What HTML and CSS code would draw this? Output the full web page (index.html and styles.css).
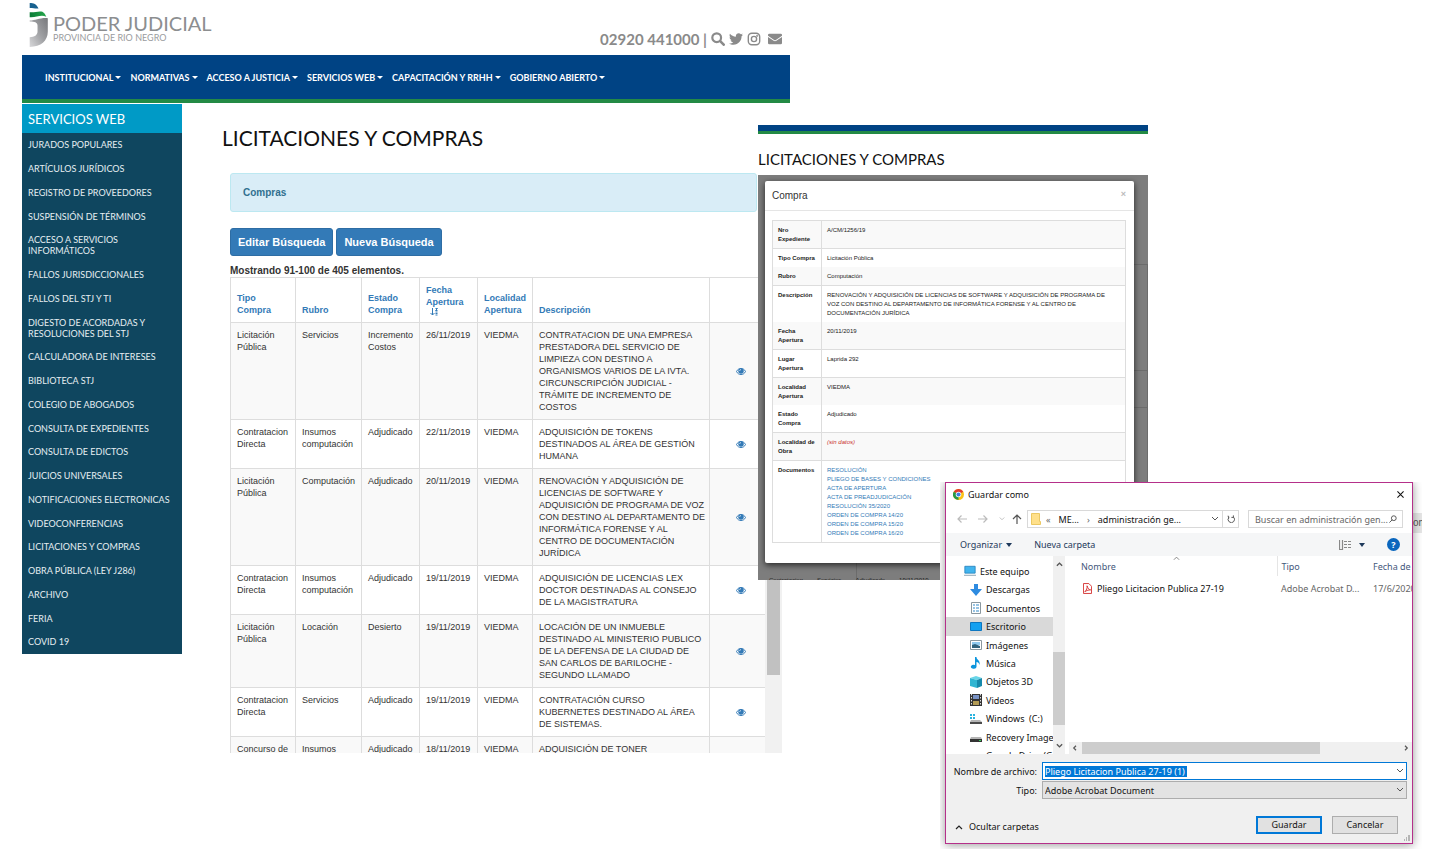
FILE: index.html
```html
<!DOCTYPE html>
<html lang="es">
<head>
<meta charset="utf-8">
<title>Poder Judicial - Licitaciones y Compras</title>
<link rel="stylesheet" href="styles.css">
</head>
<body>
<svg class="sprite" aria-hidden="true">
  <symbol id="eye" viewBox="0 0 20 14"><path fill="none" stroke="currentColor" stroke-width="2" d="M1 7c2-4 5-6 9-6s7 2 9 6c-2 4-5 6-9 6S3 11 1 7z"/><circle cx="10" cy="6" r="5.500" fill="currentColor"/><path fill="none" stroke="#fff" stroke-width="1.400" d="M7.500 6c0-2 1-3 2.500-3"/></symbol>
  <symbol id="down" viewBox="0 0 8 6"><path fill="none" stroke="currentColor" d="M1 1l3 3 3-3"/></symbol>
</svg>

<div class="site">
  <header class="site-header">
    <a class="brand" href="#">
      <svg class="brand-mark" viewBox="0 0 20 46" aria-hidden="true">
        <defs>
          <linearGradient id="gray" x1="1" y1="0" x2="0" y2="1"><stop offset="0" stop-color="#77787b"/><stop offset=".5" stop-color="#a0a1a4"/><stop offset="1" stop-color="#d8d8da"/></linearGradient>
          <linearGradient id="green" x1="0" y1="0" x2="1" y2="0"><stop offset="0" stop-color="#0a7a35"/><stop offset="1" stop-color="#27a84d"/></linearGradient>
        </defs>
        <path fill="#17618f" d="M1 0c4 0 7 1 9 5.500-3 .5-5-.5-9-.5z"/>
        <path fill="url(#green)" d="M1 9.500c5 .5 9-1.500 13-.5 2 1 3 3 4 5-6-2.500-10 1-17 .5z"/>
        <path fill="url(#gray)" d="M1 18c6 0 10-3 18.500-2.500v14c0 9-7 15.500-18.500 15.500V35c5 0 8-2 8-6v-6c0-3-3-4-8-4z"/>
      </svg>
      <span class="brand-text"><span class="brand-name">PODER JUDICIAL</span><span class="brand-sub">PROVINCIA DE RIO NEGRO</span></span>
    </a>
    <div class="contact">
      <span>02920 441000 |</span>
      <a href="#" aria-label="Buscar"><svg viewBox="0 0 16 16"><circle cx="6.500" cy="6.500" r="5" fill="none" stroke="currentColor" stroke-width="2.500"/><path stroke="currentColor" stroke-width="3" stroke-linecap="round" d="M10.500 10.500l4 4"/></svg></a>
      <a href="#" aria-label="Twitter"><svg viewBox="0 0 512 512"><path fill="currentColor" d="M459 152c.3 4.500.3 9 .3 13.600 0 139-105.600 299-298.500 299C101.500 464.500 46 447 0 417c8.500 1 16.600 1.300 25.300 1.300 49 0 94-16.600 130.300-45-46-1-85-31-98-73 6.500 1 13 1.600 20 1.600 9.400 0 19-1.300 27.600-3.600C57 288.500 21 246 21 195v-1.300c14 7.800 30 12.700 47.400 13.300C40 188 21 156 21 119.500c0-19.500 5-37.400 14.300-53 52 64 130 106 217 110.500-1.600-7.800-2.600-16-2.600-24C250 95 297 48 355 48c30 0 57.500 12.700 76.700 33 23.700-4.500 46.500-13.300 66.600-25.300-7.800 24.400-24.400 45-46 58 21-2.300 41.600-8 60.400-16.300-14.300 20.800-32 39.300-53 54z"/></svg></a>
      <a href="#" aria-label="Instagram"><svg viewBox="0 0 16 16" fill="none" stroke="currentColor" stroke-width="1.600"><rect x="1.500" y="1.500" width="13" height="13" rx="4"/><circle cx="8" cy="8" r="3"/><circle cx="11.700" cy="4.300" r=".4"/></svg></a>
      <a class="mail" href="#" aria-label="Correo"><svg viewBox="0 0 16 16"><path fill="currentColor" d="M1.500 2h13A1.500 1.500 0 0 1 16 3.500v.7L9 9q-1 .7-2 0L0 4.200v-.7A1.500 1.500 0 0 1 1.500 2zM0 5.600L6.500 10q1.500 1 3 0L16 5.600v6.900a1.500 1.500 0 0 1-1.500 1.500h-13A1.500 1.500 0 0 1 0 12.500z"/></svg></a>
    </div>
  </header>

  <nav class="main-nav">
    <a href="#">INSTITUCIONAL</a>
    <a href="#">NORMATIVAS</a>
    <a href="#">ACCESO A JUSTICIA</a>
    <a href="#">SERVICIOS WEB</a>
    <a href="#">CAPACITACIÓN Y RRHH</a>
    <a href="#">GOBIERNO ABIERTO</a>
  </nav>

  <div class="site-body">
    <aside class="sidebar">
      <h2>SERVICIOS WEB</h2>
      <ul>
        <li><a href="#">JURADOS POPULARES</a></li>
        <li><a href="#">ARTÍCULOS JURÍDICOS</a></li>
        <li><a href="#">REGISTRO DE PROVEEDORES</a></li>
        <li><a href="#">SUSPENSIÓN DE TÉRMINOS</a></li>
        <li><a href="#">ACCESO A SERVICIOS<br>INFORMÁTICOS</a></li>
        <li><a href="#">FALLOS JURISDICCIONALES</a></li>
        <li><a href="#">FALLOS DEL STJ Y TI</a></li>
        <li><a href="#">DIGESTO DE ACORDADAS Y<br>RESOLUCIONES DEL STJ</a></li>
        <li><a href="#">CALCULADORA DE INTERESES</a></li>
        <li><a href="#">BIBLIOTECA STJ</a></li>
        <li><a href="#">COLEGIO DE ABOGADOS</a></li>
        <li><a href="#">CONSULTA DE EXPEDIENTES</a></li>
        <li><a href="#">CONSULTA DE EDICTOS</a></li>
        <li><a href="#">JUICIOS UNIVERSALES</a></li>
        <li><a href="#">NOTIFICACIONES ELECTRONICAS</a></li>
        <li><a href="#">VIDEOCONFERENCIAS</a></li>
        <li><a href="#">LICITACIONES Y COMPRAS</a></li>
        <li><a href="#">OBRA PÚBLICA (LEY J286)</a></li>
        <li><a href="#">ARCHIVO</a></li>
        <li><a href="#">FERIA</a></li>
        <li><a href="#">COVID 19</a></li>
      </ul>
    </aside>

    <main class="content">
      <h1>LICITACIONES Y COMPRAS</h1>
      <div class="panel">
        <div class="alert">Compras</div>
        <div class="actions">
          <button type="button">Editar Búsqueda</button>
          <button type="button">Nueva Búsqueda</button>
        </div>
        <p class="summary">Mostrando 91-100 de 405 elementos.</p>
        <div class="results">
          <div class="results-view">
            <table class="grid">
              <colgroup><col class="c-tipo"><col class="c-rubro"><col class="c-estado"><col class="c-fecha"><col class="c-loc"><col class="c-desc"><col class="c-act"></colgroup>
              <thead>
                <tr>
                  <th><a href="#">Tipo<br>Compra</a></th>
                  <th><a href="#">Rubro</a></th>
                  <th><a href="#">Estado<br>Compra</a></th>
                  <th><a href="#">Fecha<br>Apertura<svg class="sort" viewBox="0 0 16 16" aria-hidden="true"><path fill="none" stroke="currentColor" stroke-width="2" d="M5 0v14M1 10l4 4 4-4M11 1h4l-4 4h4M11 8h4M11 11h4M11 14h4"/></svg></a></th>
                  <th><a href="#">Localidad<br>Apertura</a></th>
                  <th><a href="#">Descripción</a></th>
                  <th></th>
                </tr>
              </thead>
              <tbody>
                <tr><td>Licitación Pública</td><td>Servicios</td><td>Incremento Costos</td><td>26/11/2019</td><td>VIEDMA</td><td>CONTRATACION DE UNA EMPRESA<br>PRESTADORA DEL SERVICIO DE<br>LIMPIEZA CON DESTINO A<br>ORGANISMOS VARIOS DE LA IVTA.<br>CIRCUNSCRIPCIÓN JUDICIAL -<br>TRÁMITE DE INCREMENTO DE<br>COSTOS</td><td class="act"><a href="#" aria-label="Ver"><svg><use href="#eye"/></svg></a></td></tr>
                <tr><td>Contratacion Directa</td><td>Insumos computación</td><td>Adjudicado</td><td>22/11/2019</td><td>VIEDMA</td><td>ADQUISICIÓN DE TOKENS<br>DESTINADOS AL ÁREA DE GESTIÓN<br>HUMANA</td><td class="act"><a href="#" aria-label="Ver"><svg><use href="#eye"/></svg></a></td></tr>
                <tr><td>Licitación Pública</td><td>Computación</td><td>Adjudicado</td><td>20/11/2019</td><td>VIEDMA</td><td>RENOVACIÓN Y ADQUISICIÓN DE<br>LICENCIAS DE SOFTWARE Y<br>ADQUISICIÓN DE PROGRAMA DE VOZ<br>CON DESTINO AL DEPARTAMENTO DE<br>INFORMÁTICA FORENSE Y AL<br>CENTRO DE DOCUMENTACIÓN<br>JURÍDICA</td><td class="act"><a href="#" aria-label="Ver"><svg><use href="#eye"/></svg></a></td></tr>
                <tr><td>Contratacion Directa</td><td>Insumos computación</td><td>Adjudicado</td><td>19/11/2019</td><td>VIEDMA</td><td>ADQUISICIÓN DE LICENCIAS LEX<br>DOCTOR DESTINADAS AL CONSEJO<br>DE LA MAGISTRATURA</td><td class="act"><a href="#" aria-label="Ver"><svg><use href="#eye"/></svg></a></td></tr>
                <tr><td>Licitación Pública</td><td>Locación</td><td>Desierto</td><td>19/11/2019</td><td>VIEDMA</td><td>LOCACIÓN DE UN INMUEBLE<br>DESTINADO AL MINISTERIO PUBLICO<br>DE LA DEFENSA DE LA CIUDAD DE<br>SAN CARLOS DE BARILOCHE -<br>SEGUNDO LLAMADO</td><td class="act"><a href="#" aria-label="Ver"><svg><use href="#eye"/></svg></a></td></tr>
                <tr><td>Contratacion Directa</td><td>Servicios</td><td>Adjudicado</td><td>19/11/2019</td><td>VIEDMA</td><td>CONTRATACIÓN CURSO<br>KUBERNETES DESTINADO AL ÁREA<br>DE SISTEMAS.</td><td class="act"><a href="#" aria-label="Ver"><svg><use href="#eye"/></svg></a></td></tr>
                <tr><td>Concurso de</td><td>Insumos</td><td>Adjudicado</td><td>18/11/2019</td><td>VIEDMA</td><td>ADQUISICIÓN DE TONER</td><td></td></tr>
              </tbody>
            </table>
          </div>
          <div class="scrollbar"><div class="thumb"></div></div>
        </div>
      </div>
    </main>
  </div>
</div>

<section class="detail">
  <div class="detail-bar"></div>
  <h2>LICITACIONES Y COMPRAS</h2>
  <div class="backdrop">
    <div class="modal" role="dialog" aria-labelledby="modal-title">
      <div class="modal-head"><h3 id="modal-title">Compra</h3><button type="button" aria-label="Cerrar">×</button></div>
      <div class="modal-body">
        <table class="record">
          <tr><th>Nro<br>Expediente</th><td>A/CM/1256/19</td></tr>
          <tr class="plain line"><th>Tipo Compra</th><td>Licitación Pública</td></tr>
          <tr><th>Rubro</th><td>Computación</td></tr>
          <tr class="plain line"><th>Descripción</th><td>RENOVACIÓN Y ADQUISICIÓN DE LICENCIAS DE SOFTWARE Y ADQUISICIÓN DE PROGRAMA DE<br>VOZ CON DESTINO AL DEPARTAMENTO DE INFORMÁTICA FORENSE Y AL CENTRO DE<br>DOCUMENTACIÓN JURÍDICA</td></tr>
          <tr><th>Fecha<br>Apertura</th><td>20/11/2019</td></tr>
          <tr class="plain line"><th>Lugar<br>Apertura</th><td>Laprida 292</td></tr>
          <tr class="line"><th>Localidad<br>Apertura</th><td>VIEDMA</td></tr>
          <tr class="plain"><th>Estado<br>Compra</th><td>Adjudicado</td></tr>
          <tr class="line"><th>Localidad de<br>Obra</th><td><em>(sin datos)</em></td></tr>
          <tr class="plain line"><th>Documentos</th><td class="docs"><a href="#">RESOLUCIÓN</a><a href="#">PLIEGO DE BASES Y CONDICIONES</a><a href="#">ACTA DE APERTURA</a><a href="#">ACTA DE PREADJUDICACIÓN</a><a href="#">RESOLUCIÓN 35/2020</a><a href="#">ORDEN DE COMPRA 14/20</a><a href="#">ORDEN DE COMPRA 15/20</a><a href="#">ORDEN DE COMPRA 16/20</a></td></tr>
        </table>
      </div>
    </div>
    <div class="behind"><span>Contratacion</span><span>Servicios</span><span>Adjudicado</span><span>19/11/2019</span></div>
  </div>
</section>

<section class="save">
  <span class="edge-text">om</span>
  <form class="dialog" role="dialog" aria-labelledby="save-title">
    <div class="titlebar">
      <svg class="chrome" viewBox="0 0 24 24" aria-hidden="true"><circle cx="12" cy="12" r="12" fill="#fbc116"/><path fill="#e33b2e" d="M12 12L1.600 6A12 12 0 0 1 22.400 6z"/><path fill="#279847" d="M12 12v12A12 12 0 0 1 1.600 6z"/><circle cx="12" cy="12" r="6" fill="#fff"/><circle cx="12" cy="12" r="4.500" fill="#3f7de0"/></svg>
      <span id="save-title">Guardar como</span>
      <button type="button" class="close" aria-label="Cerrar"><svg viewBox="0 0 8 8"><path stroke="#111" stroke-width="1.200" d="M.5.5l7 7M7.500.5l-7 7"/></svg></button>
    </div>
    <div class="address-row">
      <button type="button" class="dim" aria-label="Atrás"><svg viewBox="0 0 10 8"><path d="M10 4H1M4.500.5L1 4l3.500 3.500"/></svg></button>
      <button type="button" class="dim" aria-label="Adelante"><svg viewBox="0 0 10 8"><path d="M0 4h9M5.500.5L9 4 5.500 7.500"/></svg></button>
      <button type="button" class="dim small" aria-label="Recientes"><svg viewBox="0 0 8 6"><path d="M1 1l3 3 3-3"/></svg></button>
      <button type="button" class="up" aria-label="Arriba"><svg viewBox="0 0 10 10"><path d="M5 10V1M1 5l4-4 4 4"/></svg></button>
      <div class="address">
        <svg class="folder" viewBox="0 0 10 12" aria-hidden="true"><path fill="#ffe08a" stroke="#ebc863" d="M.5.500h8v8h1v3h-9z"/></svg>
        <span class="chev">«</span><span class="crumb">ME...</span><span class="chev">›</span><span class="crumb last">administración ge...</span>
        <svg class="down"><use href="#down"/></svg>
        <button type="button" class="refresh" aria-label="Actualizar"><svg viewBox="0 0 10 10"><path d="M2 1.500H.8M2 1.500v3M2.300 3A4 4 0 1 0 8 2.500M8 .5v2.500H5.500"/></svg></button>
      </div>
      <label class="search"><input type="text" placeholder="Buscar en administración gen..." aria-label="Buscar"><svg viewBox="0 0 10 10"><circle cx="6" cy="4" r="3"/><path d="M4 6L.5 9.500"/></svg></label>
    </div>
    <div class="toolbar">
      <button type="button">Organizar <i class="tri"></i></button>
      <button type="button">Nueva carpeta</button>
      <span class="spacer"></span>
      <button type="button" class="view" aria-label="Vista"><svg viewBox="0 0 12 10"><path stroke="#888" d="M.5 0v9.500h3V0M5 1.500h3M9 1.500h3M5 4.500h3M9 4.500h3M5 7.500h3M9 7.500h3"/></svg><i class="tri"></i></button>
      <button type="button" class="help" aria-label="Ayuda">?</button>
    </div>
    <div class="browser">
      <div class="tree">
        <ul>
          <li class="root"><svg viewBox="0 0 14 12"><path fill="#41b4ee" stroke="#2683bd" d="M1 .5h12v8H1z"/><path stroke="#7c98ab" d="M0 11h14"/></svg>Este equipo</li>
          <li><svg viewBox="0 0 12 12"><path fill="#2e8be0" d="M4 0h4v5h4l-6 7-6-7h4z"/></svg>Descargas</li>
          <li><svg viewBox="0 0 12 12"><path fill="#fff" stroke="#8b989f" d="M1.500.5h9v11h-9z"/><path stroke="#3189c8" d="M3 3h2M6 3h3M3 6h2M6 6h3M3 9h2M6 9h3"/></svg>Documentos</li>
          <li class="selected"><svg viewBox="0 0 12 12"><path fill="#14a0f0" stroke="#0d76c0" d="M.5 1.500h11v8H.5z"/></svg>Escritorio</li>
          <li><svg viewBox="0 0 12 12"><path fill="#fff" stroke="#8b989f" d="M.5 1.500h11v9H.5z"/><path fill="#8fc9ee" d="M2 3h8v3H2z"/><path fill="#31637d" d="M2 9V6l3-1 5 2v2z"/></svg>Imágenes</li>
          <li><svg viewBox="0 0 12 12"><path fill="#0d95dd" d="M5 0h1.500c0 3 4 3 3 8-.5-2-1.500-3-3-3v5A2.800 2 0 1 1 5 8z"/></svg>Música</li>
          <li><svg viewBox="0 0 12 12"><path fill="#69d5e8" d="M0 2l6-2 6 2-5 2z"/><path fill="#30b5d2" d="M0 2l7 2v8l-7-2z"/><path fill="#1689ab" d="M7 4l5-2v8l-5 2z"/></svg>Objetos 3D</li>
          <li><svg viewBox="0 0 12 12"><path fill="#333" d="M0 0h12v12H0z"/><path stroke="#ddd" stroke-dasharray="1.500 1.500" d="M1.500 0v12M10.500 0v12"/><path fill="#7892c4" d="M3 1h6v4H3z"/><path fill="#b39b55" d="M3 7h6v4H3z"/></svg>Videos</li>
          <li><svg viewBox="0 0 12 12"><path fill="#29b3df" d="M0 1h2v2H0zM3 1h2v2H3zM0 4h2v2H0zM3 4h2v2H3z"/><path fill="#b5b5b5" d="M1 7h9l2 2H0z"/><path fill="#4b4b4b" d="M0 9h12v2H0z"/></svg>Windows&nbsp; (C:)</li>
          <li><svg viewBox="0 0 12 12"><path fill="#b5b5b5" d="M1 6h10l1 2H0z"/><path fill="#333" d="M0 8h12v3H0z"/><path fill="#3bd45b" d="M9 9h2v1H9z"/></svg>Recovery Image</li>
          <li><span class="noicon"></span>Google Drive (G:)</li>
        </ul>
      </div>
      <div class="vscroll"><svg viewBox="0 0 8 6"><path d="M1 5l3-3 3 3"/></svg><div class="vthumb"></div><svg viewBox="0 0 8 6"><path d="M1 1l3 3 3-3"/></svg></div>
      <div class="files">
        <table>
          <thead><tr><th class="f-name"><svg class="asc" viewBox="0 0 8 4" aria-hidden="true"><path fill="none" stroke="#777" d="M1 4l3-3 3 3"/></svg>Nombre</th><th class="f-type">Tipo</th><th>Fecha de</th></tr></thead>
          <tbody><tr><td class="f-name"><span><svg viewBox="0 0 10 12"><path fill="#fff" stroke="#d42a2a" d="M.5.5h6l3 3v8h-9z"/><path fill="none" stroke="#d42a2a" d="M2 9.500C4 8 5 5 4.500 3c1 3 2 4.500 4 4.500-2 0-4 .5-6.500 2z"/></svg>Pliego Licitacion Publica 27-19</span></td><td>Adobe Acrobat D...</td><td>17/6/2020</td></tr></tbody>
        </table>
        <div class="hscroll"><svg viewBox="0 0 6 8"><path d="M5 1L2 4l3 3"/></svg><div class="htrack"><div class="hthumb"></div></div><svg viewBox="0 0 6 8"><path d="M1 1l3 3-3 3"/></svg></div>
      </div>
    </div>
    <div class="fields">
      <label for="fname">Nombre de archivo:</label>
      <div class="combo active"><input id="fname" type="text" value="Pliego Licitacion Publica 27-19 (1)"><svg class="down"><use href="#down"/></svg></div>
      <label for="ftype">Tipo:</label>
      <div class="combo"><select id="ftype"><option>Adobe Acrobat Document</option></select><svg class="down"><use href="#down"/></svg></div>
    </div>
    <div class="footer">
      <button type="button" class="toggle"><svg viewBox="0 0 8 6"><path d="M1 5l3-3 3 3"/></svg>Ocultar carpetas</button>
      <span class="spacer"></span>
      <button type="submit" class="btn primary">Guardar</button>
      <button type="button" class="btn">Cancelar</button>
    </div>
    <svg class="grip" viewBox="0 0 6 6" aria-hidden="true"><path fill="#b5b5b5" d="M0 4h1v2H0zM2 2h1v4H2zM4 0h2v6H4z"/></svg>
  </form>
</section>
</body>
</html>
```

FILE: styles.css
```css
* { box-sizing: border-box; }
body { margin: 0; background: #fff; color: #333; font-family: "Liberation Sans", Arial, sans-serif; position: relative; min-height: 100vh; overflow: hidden; }
a { color: inherit; text-decoration: none; }
h1, h2, h3, p, ul { margin: 0; padding: 0; font-weight: 400; }
ul { list-style: none; }
button { font-family: inherit; border: 0; background: none; padding: 0; color: inherit; }
svg { display: block; }
.sprite { position: absolute; width: 0; height: 0; }
.spacer { flex: 1; }

/* Site */
.site { max-width: 768px; margin-left: 22px; font-family: Lato, sans-serif; }
.site-header { height: 55px; display: flex; justify-content: space-between; padding: 3px 8px 0 6px; }
.brand { display: flex; gap: 4px; }
.brand-mark { width: 21px; height: 45px; }
.brand-text { display: flex; flex-direction: column; padding-top: 11px; }
.brand-name { font-size: 20px; line-height: 19px; color: #8c8e90; }
.brand-sub { font-size: 9px; line-height: 10px; color: #9a9c9e; }
.contact { display: flex; align-items: center; gap: 4px; padding-top: 20px; font-size: 15px; font-weight: 700; color: #8a8a8a; }
.contact svg { width: 14px; height: 14px; }
.contact .mail { padding-left: 3px; }

.main-nav { display: flex; align-items: center; gap: 9px; height: 48px; padding-left: 23px; background: #004384; border-bottom: 4px solid #238a45; color: #fff; font-size: 9px; font-weight: 700; }
.main-nav a { display: flex; align-items: center; gap: 2px; }
.main-nav a::after { content: ""; border: 3px solid transparent; border-top-color: #fff; border-bottom: 0; }

.site-body { display: flex; gap: 40px; padding: 1px 8px 0 0; }
.sidebar { flex: 0 0 160px; align-self: flex-start; background: #0f465f; color: #e6eef2; }
.sidebar h2 { height: 29px; padding-left: 6px; background: #009ac6; color: #fff; font-size: 13px; line-height: 30px; }
.sidebar ul { display: flex; flex-direction: column; justify-content: space-around; min-height: 521px; padding-left: 6px; font-size: 9px; line-height: 11px; }

.content { flex: 1; min-width: 0; }
.content h1 { padding-top: 19px; font-size: 21px; line-height: 30px; color: #111; }
.panel { padding: 20px 0 0 8px; font-family: "Liberation Sans", Arial, sans-serif; }
.alert { margin-right: 25px; padding: 12px; border: 1px solid #bce8f1; border-radius: 3px; background: #d9edf7; color: #31708f; font-size: 10px; font-weight: 700; line-height: 13px; }
.actions { display: flex; gap: 3px; margin-top: 16px; }
.actions button { height: 28px; padding: 0 7px; border: 1px solid #2e6da4; border-radius: 3px; background: #337ab7; color: #fff; font-size: 11px; font-weight: 700; }
.summary { padding-top: 8px; font-size: 10px; font-weight: 700; line-height: 13px; }
.results { display: flex; height: 476px; }
.results-view { flex: 1; min-width: 0; overflow: hidden; }
.grid { width: 544px; table-layout: fixed; border-collapse: collapse; font-size: 9px; line-height: 12px; }
.grid th, .grid td { padding: 6px 4px 6px 6px; border: 1px solid #ddd; text-align: left; vertical-align: top; white-space: nowrap; }
.grid td { white-space: normal; }
.grid td:nth-child(n+4) { white-space: nowrap; }
.grid th { vertical-align: bottom; color: #337ab7; }
.grid tbody tr:nth-child(odd) { background: #f9f9f9; }
.sort { width: 8px; height: 8px; margin-left: 4px; }
.grid .act { vertical-align: middle; color: #337ab7; }
.act svg { width: 10px; height: 7px; margin-left: 20px; }
.c-tipo { width: 65px; } .c-rubro { width: 66px; } .c-estado, .c-fecha { width: 58px; } .c-loc { width: 55px; } .c-desc { width: 177px; } .c-act { width: 65px; }
.scrollbar { flex: 0 0 17px; background: #f1f1f1; padding: 0 2px; }
.thumb { height: 398px; background: #c1c1c1; }

/* Purchase detail */
.detail { position: absolute; left: 758px; top: 125px; width: 390px; background: #fff; }
.detail-bar { height: 9px; background: #004384; border-bottom: 3px solid #238a45; }
.detail h2 { font: 15px/21px Lato, sans-serif; padding: 15px 0 5px; color: #111; }
.backdrop {
  height: 405px; padding: 6px 14px 0 7px; overflow: hidden; background-color: #7d7d7d; background-repeat: no-repeat;
  background-image: linear-gradient(#6c6c6c, #6c6c6c), linear-gradient(#6c6c6c, #6c6c6c), linear-gradient(#6c6c6c, #6c6c6c), linear-gradient(#6c6c6c, #6c6c6c), linear-gradient(#6c6c6c, #6c6c6c);
  background-size: 14px 1px, 14px 1px, 14px 1px, 1px 316px, 1px 18px;
  background-position: right 89px, right 195px, right 232px, right 89px, 98px bottom;
}
.modal { height: 382px; border-radius: 2px; background: #fff; box-shadow: 0 2px 6px rgba(0,0,0,.7); }
.modal-head { display: flex; justify-content: space-between; height: 30px; padding: 8px 8px 0 7px; border-bottom: 1px solid #e5e5e5; }
.modal-head h3 { font-size: 10px; line-height: 14px; }
.modal-head button { font-size: 9px; font-weight: 700; line-height: 10px; color: #bbb; align-self: flex-start; }
.modal-body { padding: 9px 8px 0 7px; }
.record { width: 100%; border-collapse: collapse; border: 1px solid #ddd; font-size: 6px; line-height: 9px; color: #222; }
.record th, .record td { padding: 5px 4px 4px 5px; text-align: left; vertical-align: top; border-right: 1px solid #ddd; }
.record th { width: 49px; white-space: nowrap; }
.record tr { background: #f9f9f9; }
.record tr.plain { background: #fff; }
.record tr.line { border-top: 1px solid #ddd; }
.record em { color: #c9302c; }
.docs a { display: block; color: #337ab7; }
.behind { display: flex; gap: 14px; padding: 13px 4px 0; font-size: 6px; line-height: 9px; color: #222; }

/* Save dialog */
.save { position: absolute; left: 940px; top: 482px; width: 482px; padding: 0 9px 5px 5px; background: #fff; overflow: hidden; font-family: "Noto Sans", "Open Sans", sans-serif; font-size: 9px; color: #111; }
.edge-text { position: absolute; right: 0; top: 31px; width: 9px; overflow: hidden; font: 10px/20px "Liberation Sans", Arial, sans-serif; background: #e6e6e6; color: #555; }
.dialog { position: relative; border: 1px solid #b5308a; background: #fff; box-shadow: 0 1px 9px rgba(0,0,0,.4); }
.dialog input, .dialog select { min-width: 0; margin: 0; padding: 0; border: 0; outline: 0; background: none; font: inherit; color: inherit; appearance: none; }
.dialog button svg, .search svg, .vscroll svg, .hscroll svg { fill: none; stroke: #555; stroke-width: 1.2; }
.titlebar { display: flex; align-items: center; gap: 4px; height: 23px; padding: 0 8px 0 7px; }
.chrome { width: 11px; height: 11px; }
.close { margin-left: auto; }
.close svg { width: 7px; height: 7px; }
.address-row { display: flex; align-items: center; height: 27px; padding: 4px 9px 5px 11px; }
.address-row > button svg { width: 10px; height: 10px; margin-right: 11px; }
.address-row > .dim svg { stroke: #bbb; }
.address-row > .small svg { width: 6px; height: 6px; margin-right: 7px; }
.address-row > .up svg { margin-right: 5px; }
.address { display: flex; align-items: center; flex: 1; height: 18px; margin-right: 9px; padding-left: 3px; border: 1px solid #d9d9d9; white-space: nowrap; }
.folder { width: 10px; height: 12px; }
.chev { padding: 0 5px; color: #666; }
.crumb { padding: 0 3px; }
.last { flex: 1; }
.down { width: 8px; height: 6px; color: #555; }
.refresh { display: grid; place-items: center; width: 16px; height: 16px; margin-left: 3px; border-left: 1px solid #d9d9d9; }
.refresh svg { width: 8px; height: 8px; }
.search { display: flex; align-items: center; width: 155px; height: 18px; padding: 0 5px 0 6px; border: 1px solid #d9d9d9; }
.search input { flex: 1; }
.search input::placeholder { color: #666; opacity: 1; }
.search svg { width: 8px; height: 8px; }
.toolbar { display: flex; align-items: center; gap: 22px; height: 23px; padding: 0 12px 0 14px; background: #f5f6f7; color: #1e395b; }
.toolbar button { display: flex; align-items: center; gap: 4px; font-size: 9px; }
.tri { border: 3px solid transparent; border-top: 4px solid #1e395b; border-bottom: 0; }
.toolbar .view { gap: 8px; }
.view svg { width: 12px; height: 10px; }
.toolbar .help { justify-content: center; width: 13px; height: 13px; border-radius: 50%; background: #0a66bd; color: #fff; font-weight: 700; }
.browser { display: flex; height: 198px; }
.tree { flex: 0 0 107px; overflow: hidden; }
.tree ul { display: grid; grid-auto-rows: 1fr; height: 209px; padding-top: 6px; }
.tree li { display: flex; align-items: center; gap: 4px; margin-right: 1px; padding-left: 24px; white-space: nowrap; }
.tree li.root { padding-left: 18px; }
.tree .selected { background: #d9d9d9; }
.tree li svg, .noicon { flex: none; width: 12px; height: 12px; }
.tree .noicon { visibility: hidden; }
.vscroll { display: flex; flex-direction: column; align-items: center; width: 12px; padding: 5px 0; background: #f0f0f0; }
.vscroll svg, .hscroll svg { width: 7px; height: 6px; stroke-width: 1.6; }
.vthumb { width: 12px; height: 73px; margin: auto 0 18px; background: #cdcdcd; }
.files { flex: 1; min-width: 0; display: flex; flex-direction: column; justify-content: space-between; padding-left: 4px; overflow: hidden; }
.files table { width: 360px; table-layout: fixed; border-collapse: collapse; }
.files th, .files td { height: 20px; padding: 0 0 0 4px; text-align: left; font-weight: 400; white-space: nowrap; color: #666; }
.files th { color: #44587c; }
.files th.f-name { width: 208px; padding-left: 12px; position: relative; }
.files th.f-type { width: 92px; border-left: 1px solid #e5e5e5; }
.files td { height: 24px; }
.files .f-name { padding-left: 14px; color: #111; }
.files th.f-name { color: #44587c; }
.f-name span { display: flex; align-items: center; gap: 5px; }
.f-name svg { width: 9px; height: 11px; }
.f-name svg.asc { position: absolute; left: 104px; top: 0; width: 7px; height: 4px; }
.hscroll { display: flex; align-items: center; gap: 4px; height: 12px; padding: 0 2px; background: #f0f0f0; }
.htrack { flex: 1; height: 12px; }
.hthumb { width: 75%; height: 12px; background: #cdcdcd; }
.fields { display: grid; grid-template-columns: 91px 1fr; column-gap: 5px; row-gap: 1px; align-items: center; padding: 8px 5px 0 0; background: #f0f0f0; }
.fields label { text-align: right; white-space: nowrap; }
.combo { display: flex; align-items: center; justify-content: space-between; height: 18px; padding: 0 2px; border: 1px solid #adadad; background: #e3e3e3; }
.combo.active { border-color: #0078d7; background: #fff; }
.combo input#fname { width: 142px; height: 11px; background: #0078d7; color: #fff; line-height: 11px; }
.combo select { flex: 1; }
.footer { display: flex; align-items: center; gap: 10px; height: 44px; padding: 7px 14px 0 9px; background: #f0f0f0; }
.footer .toggle { display: flex; align-items: center; gap: 6px; padding-top: 4px; font-size: 9px; }
.footer .toggle svg { width: 8px; height: 6px; stroke: #222; }
.btn { width: 66px; height: 18px; border: 1px solid #adadad; background: #e1e1e1; font-size: 9px; }
.footer .primary { border: 2px solid #0078d7; }
.grip { position: absolute; right: 2px; bottom: 2px; width: 6px; height: 6px; }
```
